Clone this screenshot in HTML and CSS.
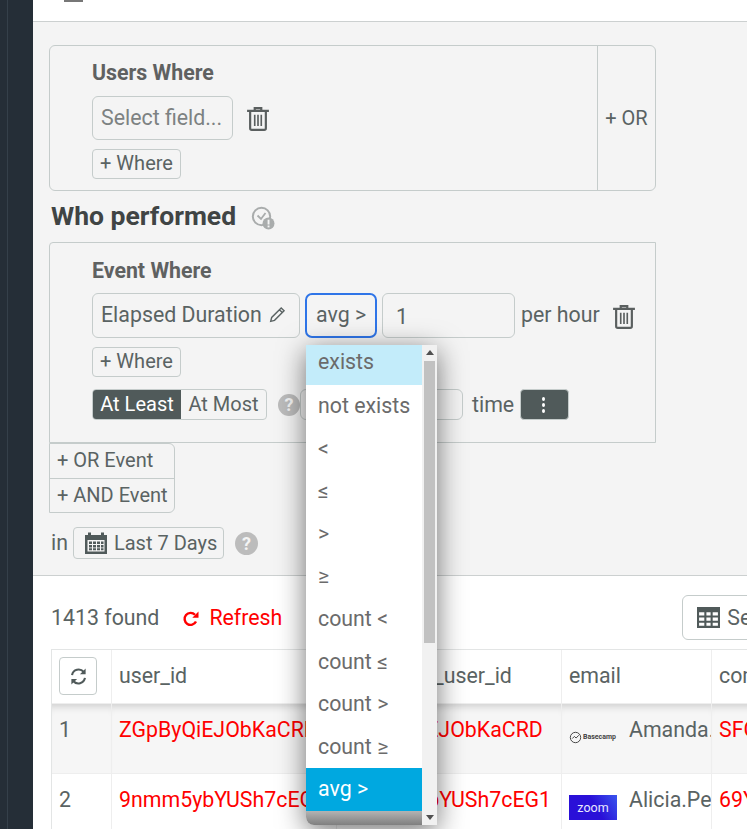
FILE: index.html
```html
<!DOCTYPE html>
<html lang="en">
<head>
    <meta charset="UTF-8">
    <title>Who performed</title>
    <link rel="stylesheet" href="styles.css">
</head>
<body>
    <aside class="sidebar"><div class="sidebar-edge"></div></aside>

    <main class="main">
        <div class="topbar">
            <div class="topbar-icon"></div>
        </div>

        <section class="filters">
            <div class="where-box">
                <div class="where-body">
                    <div class="where-title">Users Where</div>
                    <div class="row">
                        <div class="field field-select placeholder">Select field...</div>
                        <svg class="trash trash-users" viewBox="0 0 20 22"><use href="#trash-icon"/></svg>
                    </div>
                    <button class="btn btn-where">+ Where</button>
                </div>
                <div class="or-side">+ OR</div>
            </div>

            <h2 class="who">Who performed
                <svg class="who-icon" viewBox="0 0 24 24">
                    <circle cx="10.500" cy="10.500" r="8.700" fill="none" stroke="#a9acac" stroke-width="2"/>
                    <path d="M6.500 9.500l3.500 3.500 4.500-6" fill="none" stroke="#a9acac" stroke-width="1.800"/>
                    <circle cx="17.500" cy="17.500" r="6" fill="#a9acac"/>
                    <rect x="16.600" y="13.700" width="1.900" height="4.800" fill="#f4f4f4"/>
                    <rect x="16.600" y="19.500" width="1.900" height="1.900" fill="#f4f4f4"/>
                </svg>
            </h2>

            <div class="event-box">
                <div class="where-title">Event Where</div>
                <div class="row event-row">
                    <div class="field field-duration">Elapsed Duration
                        <svg class="pencil" viewBox="0 0 16 16"><path d="M11.500 1.800l2.700 2.700-9 9-3.600.9.900-3.600zM9.800 3.500l2.700 2.700" fill="none" stroke="#5a6363" stroke-width="1.300"/></svg>
                    </div>
                    <div class="operator">
                        <div class="field field-operator">avg &gt;</div>
                        <div class="dropdown">
                            <ul class="options">
                                <li class="option option-first">exists</li>
                                <li class="option">not exists</li>
                                <li class="option">&lt;</li>
                                <li class="option">≤</li>
                                <li class="option">&gt;</li>
                                <li class="option">≥</li>
                                <li class="option">count &lt;</li>
                                <li class="option">count ≤</li>
                                <li class="option">count &gt;</li>
                                <li class="option">count ≥</li>
                                <li class="option option-active">avg &gt;</li>
                                <li class="option-cut"></li>
                            </ul>
                            <div class="scrollbar">
                                <div class="arrow-up"></div>
                                <div class="thumb"></div>
                                <div class="arrow-down"></div>
                            </div>
                        </div>
                    </div>
                    <div class="field field-value">1</div>
                    <span class="unit">per hour</span>
                    <svg class="trash trash-event" viewBox="0 0 20 22"><use href="#trash-icon"/></svg>
                </div>
                <button class="btn btn-where">+ Where</button>
                <div class="row freq-row">
                    <div class="toggle">
                        <span class="toggle-on">At Least</span><span class="toggle-off">At Most</span>
                    </div>
                    <span class="help">?</span>
                    <div class="field field-times"></div>
                    <span class="unit unit-time">time</span>
                    <button class="btn-more"><span></span><span></span><span></span></button>
                </div>
            </div>

            <div class="event-buttons">
                <div class="event-btn">+ OR Event</div>
                <div class="event-btn">+ AND Event</div>
            </div>

            <div class="row range-row">
                <span class="in">in</span>
                <button class="btn btn-range">
                    <svg class="calendar" viewBox="0 0 24 24">
                        <path fill="#505a5a" fill-rule="evenodd" d="M1 4h3V1.500h3V4h10V1.500h3V4h3v19H1zM3.500 9v11.500h17V9z"/>
                        <path fill="#505a5a" d="M5 10.500h3v2.400H5zM9 10.500h3v2.400H9zM13 10.500h3v2.400h-3zM17 10.500h2.500v2.400H17zM5 14h3v2.400H5zM9 14h3v2.400H9zM13 14h3v2.400h-3zM17 14h2.500v2.400H17zM5 17.300h3v2H5zM9 17.300h3v2H9zM13 17.300h3v2h-3zM17 17.300h2.500v2H17z"/>
                    </svg>
                    Last 7 Days
                </button>
                <span class="help help-range">?</span>
            </div>
        </section>

        <section class="results">
            <div class="toolbar">
                <span class="found">1413 found</span>
                <span class="refresh">
                    <svg class="refresh-icon" viewBox="0 0 18 18"><path d="M14 11.500A6 6 0 1 1 13 4.800" fill="none" stroke="#ff0000" stroke-width="2.400"/><path d="M16.500 1.500v6.200h-6.200z" fill="#ff0000"/></svg>
                    Refresh
                </span>
                <button class="btn btn-columns">
                    <svg class="table-icon" viewBox="0 0 22 20">
                        <path fill="#505a5a" fill-rule="evenodd" d="M0 0h22v20H0zM2 5v3h5V5zm7 0v3h4V5zm6 0v3h5V5zM2 10v3h5v-3zm7 0v3h4v-3zm6 0v3h5v-3zM2 15v3h5v-3zm7 0v3h4v-3zm6 0v3h5v-3z"/>
                    </svg>
                    Select Columns
                </button>
            </div>

            <div class="table">
                <div class="cell cell-index head">
                    <button class="btn-sync">
                        <svg viewBox="0 0 20 20"><path d="M3.200 8.500A7 7 0 0 1 15.500 5.300M16.800 11.500A7 7 0 0 1 4.500 14.700" fill="none" stroke="#505a5a" stroke-width="2.200"/><path d="M17.500 1.500v6h-6zM2.500 18.500v-6h6z" fill="#505a5a"/></svg>
                    </button>
                </div>
                <div class="cell head">user_id</div>
                <div class="cell head">customer_user_id</div>
                <div class="cell head">email</div>
                <div class="cell head">company</div>

                <div class="cell cell-index shaded">1</div>
                <div class="cell red shaded">ZGpByQiEJObKaCRD</div>
                <div class="cell red shaded">ZGpByQiEJObKaCRD</div>
                <div class="cell shaded cell-email">
                    <span class="logo logo-basecamp">
                        <svg viewBox="0 0 12 12"><circle cx="6" cy="6" r="4.800" fill="none" stroke="#444" stroke-width="0.900"/><path d="M3 7l2-2 1.500 1.500L9 4" fill="none" stroke="#444" stroke-width="0.900"/></svg>
                        <b>Basecamp</b>
                    </span>
                    <span class="person">Amanda.Price</span>
                </div>
                <div class="cell red shaded">SFGhq2</div>

                <div class="cell cell-index">2</div>
                <div class="cell red">9nmm5ybYUSh7cEG1</div>
                <div class="cell red">9nmm5ybYUSh7cEG1</div>
                <div class="cell cell-email">
                    <span class="logo logo-zoom">zoom</span>
                    <span class="person">Alicia.Perez</span>
                </div>
                <div class="cell red">69Yfd1</div>
            </div>
        </section>
    </main>

    <svg class="icon-defs">
        <symbol id="trash-icon" viewBox="0 0 20 22">
            <path d="M7 2.500V1h6v1.500M0 3.500h20" fill="none" stroke="#5a5f5f" stroke-width="2"/>
            <path d="M2.800 4v15.500a1.500 1.500 0 0 0 1.500 1.500h11.400a1.500 1.500 0 0 0 1.500-1.500V4" fill="none" stroke="#5a5f5f" stroke-width="2"/>
            <path d="M7 7v10.500M10 7v10.500M13 7v10.500" fill="none" stroke="#5a5f5f" stroke-width="1.500"/>
        </symbol>
    </svg>
</body>
</html>
```

FILE: styles.css
```css
html,
body {
    height: 829px;
    margin: 0;
    overflow: hidden;
}

body {
    display: flex;
    font-family: 'Roboto', sans-serif;
    font-size: 21.33px;
    color: #5a6363;
    background: #fff;
}

button {
    font: inherit;
    color: inherit;
}

.sidebar {
    flex: 0 0 33px;
    background: #252e37;
}

.sidebar-edge {
    width: 1px;
    height: 100%;
    margin-left: 7px;
    background: #35404a;
}

.main {
    flex: 1;
    min-width: 0;
    overflow: hidden;
}

.topbar {
    height: 21px;
    background: #fff;
    border-bottom: 1px solid #ccd0d0;
    padding-left: 31px;
}

.topbar-icon {
    width: 19px;
    height: 2px;
    background: #777;
}

.filters {
    background: #f4f4f4;
    border-bottom: 1px solid #ccd0d0;
    padding: 23px 91px 16px 16px;
    height: 514px;
}

.row {
    display: flex;
    align-items: center;
}

.where-box {
    display: flex;
    height: 146px;
    box-sizing: border-box;
    border: 1px solid #c5cccb;
    border-radius: 6px;
}

.where-body {
    flex: 1;
    padding: 15px 0 0 42px;
}

.where-title {
    font-weight: 700;
    line-height: 24px;
    color: #5f6161;
}

.where-body .row {
    margin-top: 11px;
}

.or-side {
    flex: 0 0 57px;
    display: flex;
    align-items: center;
    justify-content: center;
    border-left: 1px solid #c5cccb;
    padding-bottom: 1px;
    font-size: 20px;
}

.field {
    box-sizing: border-box;
    border: 1px solid #c5cccb;
    border-radius: 6px;
    display: flex;
    align-items: center;
    padding: 0 8px;
    line-height: 24px;
    white-space: nowrap;
}

.field-select {
    width: 141px;
    height: 44px;
}

.placeholder {
    color: #7d8282;
}

.trash {
    width: 22px;
    height: 24px;
    margin-left: 14px;
}

.trash-users {
    margin-top: 2px;
}

.btn {
    display: block;
    box-sizing: border-box;
    background: #f4f4f4;
    border: 1px solid #c5cccb;
    border-radius: 4px;
    padding: 0 7px;
    height: 30px;
    font-size: 20px;
    line-height: 24px;
    white-space: nowrap;
}

.btn-where {
    width: 89px;
    margin-top: 9px;
    padding-bottom: 2px;
}

.who {
    margin: 9px 0 11px 2px;
    font-size: 26.5px;
    font-weight: 700;
    line-height: 31px;
    color: #404444;
    display: flex;
    align-items: center;
}

.who-icon {
    width: 24px;
    height: 24px;
    margin: 5px 0 0 15px;
}

.event-box {
    height: 201px;
    box-sizing: border-box;
    border: 1px solid #c5cccb;
    border-top-left-radius: 4px;
    padding: 16px 0 0 42px;
}

.event-row {
    margin-top: 10px;
}

.field-duration {
    width: 208px;
    height: 45px;
    padding-bottom: 2px;
}

.pencil {
    width: 17px;
    height: 17px;
    margin-left: 7px;
}

.operator {
    position: relative;
    margin-left: 5px;
}

.field-operator {
    width: 72px;
    height: 45px;
    border: 2px solid #2f75e8;
    border-radius: 7px;
    padding: 0 0 1px 9px;
}

.dropdown {
    position: absolute;
    top: 52px;
    left: 1px;
    z-index: 5;
    width: 131px;
    height: 480px;
    display: flex;
    background: #fff;
    border-radius: 0 0 0 8px;
    box-shadow: 0 6px 28px rgba(0, 0, 0, 0.55);
}

.options {
    flex: 1;
    margin: 0;
    padding: 0;
    list-style: none;
    color: #6b6b6b;
}

.option {
    height: 42.6px;
    line-height: 41px;
    padding-left: 12px;
}

.option-first {
    height: 40px;
    line-height: 34px;
    background: #c3ecfa;
}

.option-active {
    background: #00a8e0;
    color: #fff;
}

.option-cut {
    height: 14px;
    margin-top: 0;
    border-radius: 0 0 0 8px;
    background: linear-gradient(#b3b3b3, #7f7f7f);
}

.scrollbar {
    flex: 0 0 15px;
    display: flex;
    flex-direction: column;
    align-items: center;
    background: #f1f1f1;
}

.arrow-up {
    margin-top: 5px;
    border: 4px solid transparent;
    border-top: 0;
    border-bottom: 5px solid #505050;
}

.thumb {
    width: 11px;
    height: 282px;
    margin-top: 6px;
    background: #c1c1c1;
}

.arrow-down {
    margin-top: auto;
    margin-bottom: 5px;
    border: 4px solid transparent;
    border-bottom: 0;
    border-top: 5px solid #505050;
}

.field-value {
    width: 133px;
    height: 45px;
    margin-left: 5px;
    padding: 2px 0 0 13px;
}

.unit {
    margin-left: 6px;
    padding-bottom: 2px;
}

.trash-event {
    margin-left: 13px;
    margin-top: 2px;
}

.freq-row {
    margin-top: 12px;
}

.toggle {
    display: flex;
    box-sizing: border-box;
    width: 175px;
    height: 31px;
    border: 1px solid #c5cccb;
    border-radius: 4px;
    font-size: 20px;
    line-height: 28px;
}

.toggle-on {
    width: 88px;
    text-align: center;
    color: #fff;
    background: #505a5a;
    border-radius: 3px 0 0 3px;
}

.toggle-off {
    flex: 1;
    text-align: center;
}

.help {
    width: 22px;
    height: 22px;
    margin-left: 11px;
    border-radius: 50%;
    background: #bcbcbc;
    color: #f4f4f4;
    font-size: 18px;
    font-weight: 700;
    line-height: 22px;
    text-align: center;
    flex: none;
}

.field-times {
    width: 163px;
    height: 31px;
    margin-left: 0;
}

.unit-time {
    margin-left: 9px;
    padding-bottom: 0;
}

.btn-more {
    width: 49px;
    height: 31px;
    margin-left: 6px;
    padding: 0 3px 0 0;
    display: flex;
    flex-direction: column;
    align-items: center;
    justify-content: center;
    gap: 2px;
    background: #505a5a;
    border: 1px solid #c5cccb;
    border-radius: 4px;
}

.btn-more span {
    width: 3px;
    height: 4px;
    border-radius: 50%;
    background: #fff;
}

.event-buttons {
    width: 126px;
    box-sizing: border-box;
    border: 1px solid #c5cccb;
    border-radius: 0 6px 6px 0;
    font-size: 20px;
}

.event-btn {
    height: 34px;
    line-height: 33px;
    padding-left: 7px;
    white-space: nowrap;
}

.event-btn + .event-btn {
    height: 34px;
    box-sizing: border-box;
    border-top: 1px solid #c5cccb;
}

.range-row {
    margin: 14px 0 0 2px;
}

.in {
    padding-bottom: 1px;
}

.btn-range {
    display: flex;
    align-items: center;
    width: 151px;
    height: 32px;
    margin-left: 5px;
    padding: 0 10px 1px;
    gap: 6px;
}

.calendar {
    width: 24px;
    height: 24px;
    flex: none;
}

.help-range {
    width: 23px;
    height: 23px;
    line-height: 23px;
}

.results {
    background: #fff;
    padding: 19px 0 0 18px;
}

.toolbar {
    display: flex;
    align-items: center;
    height: 45px;
    white-space: nowrap;
}

.refresh {
    display: flex;
    align-items: center;
    gap: 9px;
    margin-left: 23px;
    color: #ff0000;
}

.refresh-icon {
    width: 18px;
    height: 18px;
    margin-top: 3px;
}

.btn-columns {
    display: flex;
    align-items: center;
    gap: 7px;
    height: 45px;
    width: 190px;
    margin-left: 400px;
    padding: 0 14px;
    flex: none;
    background: #fff;
    border-radius: 6px;
    font-size: 21.33px;
}

.table-icon {
    width: 23px;
    height: 21px;
    flex: none;
}

.table {
    display: grid;
    grid-template-columns: 60px 225px 225px 150px 150px;
    grid-template-rows: 54px 70px 70px;
    margin-top: 9px;
    border-top: 1px solid #e3e5e5;
    border-left: 1px solid #e3e5e5;
    width: max-content;
}

.cell {
    box-sizing: border-box;
    padding: 14px 8px 0 7px;
    border-right: 1px solid #eeeeee;
    border-bottom: 1px solid #eeeeee;
    line-height: 24px;
    white-space: nowrap;
    overflow: hidden;
}

.cell-index {
    padding-left: 7px;
}

.head.cell-index {
    padding: 7px 0 0 7px;
}

.shaded {
    background: #f6f6f6;
    box-shadow: inset 0 9px 8px -7px rgba(0, 0, 0, 0.18);
}

.red {
    color: #ff0000;
}

.btn-sync {
    display: flex;
    align-items: center;
    justify-content: center;
    box-sizing: border-box;
    width: 38px;
    height: 38px;
    padding: 0;
    background: #fff;
    border: 1px solid #c5cccb;
    border-radius: 4px;
}

.btn-sync svg {
    width: 19px;
    height: 19px;
}

.cell-email {
    display: flex;
    align-items: flex-start;
    padding-right: 0;
}

.logo {
    flex: 0 0 48px;
    height: 25px;
    margin: 7px 12px 0 0;
}

.logo-basecamp {
    display: flex;
    align-items: center;
    gap: 1px;
    height: 15px;
    margin-top: 12px;
    font-size: 7px;
    line-height: 15px;
    color: #444;
}

.logo-basecamp svg {
    width: 13px;
    height: 13px;
    flex: none;
}

.logo-zoom {
    background: linear-gradient(60deg, #2a10d8 55%, #3a55ee);
    color: #e8e8ff;
    font-size: 12.5px;
    line-height: 25px;
    text-align: center;
}

.icon-defs {
    display: none;
}
```
